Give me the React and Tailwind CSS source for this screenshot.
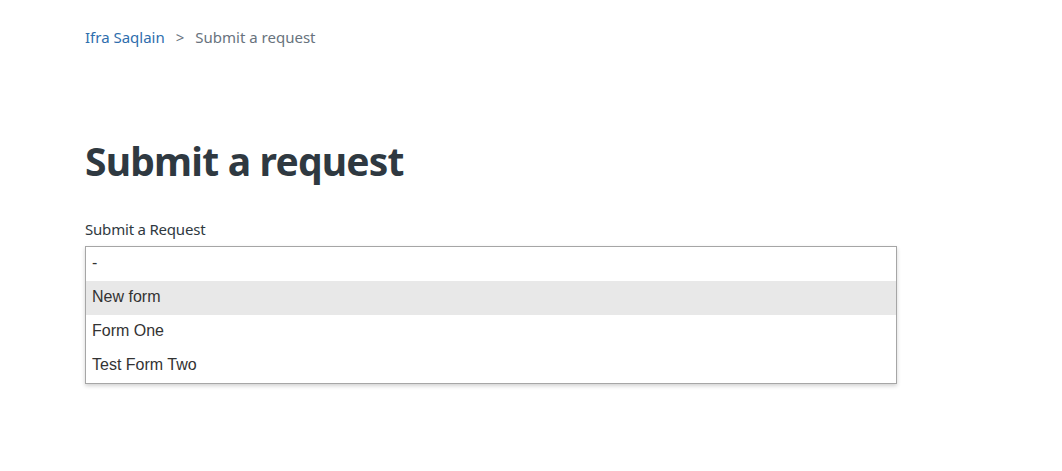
const options = ["-", "New form", "Form One", "Test Form Two"];

export default function App() {
  const active = 1;
  return (
    <div className="min-h-[471px] bg-white font-['Noto_Sans','Open_Sans',sans-serif]">
      <div className="pl-[85px] pt-[26px]">
        <nav className="flex items-center text-[15px] leading-[22px]">
          <a className="text-[#2e6ead]">Ifra Saqlain</a>
          <span className="mx-[11px] text-[#68737d]">&gt;</span>
          <span className="text-[#68737d]">Submit a request</span>
        </nav>

        <h1 className="mt-[89px] text-[39px] font-bold leading-[48px] tracking-[-0.8px] text-[#2f3941]">
          Submit a request
        </h1>

        <label className="mt-[33px] block text-[15px] leading-[22px] tracking-[-0.2px] text-[#2f3941]">
          Submit a Request
        </label>

        <ul className="mt-[6px] w-[812px] border border-[#a6a6a6] bg-white shadow-[0_2px_4px_rgba(0,0,0,0.18)] font-['Liberation_Sans',Arial,sans-serif] text-[16px] text-[#333]">
          {options.map((opt, i) => (
            <li
              key={opt}
              className={
                "flex h-[34px] items-center pb-[3px] pl-[6px] " +
                (i === active ? "bg-[#e8e8e8]" : "")
              }
            >
              {opt}
            </li>
          ))}
        </ul>
      </div>
    </div>
  );
}
